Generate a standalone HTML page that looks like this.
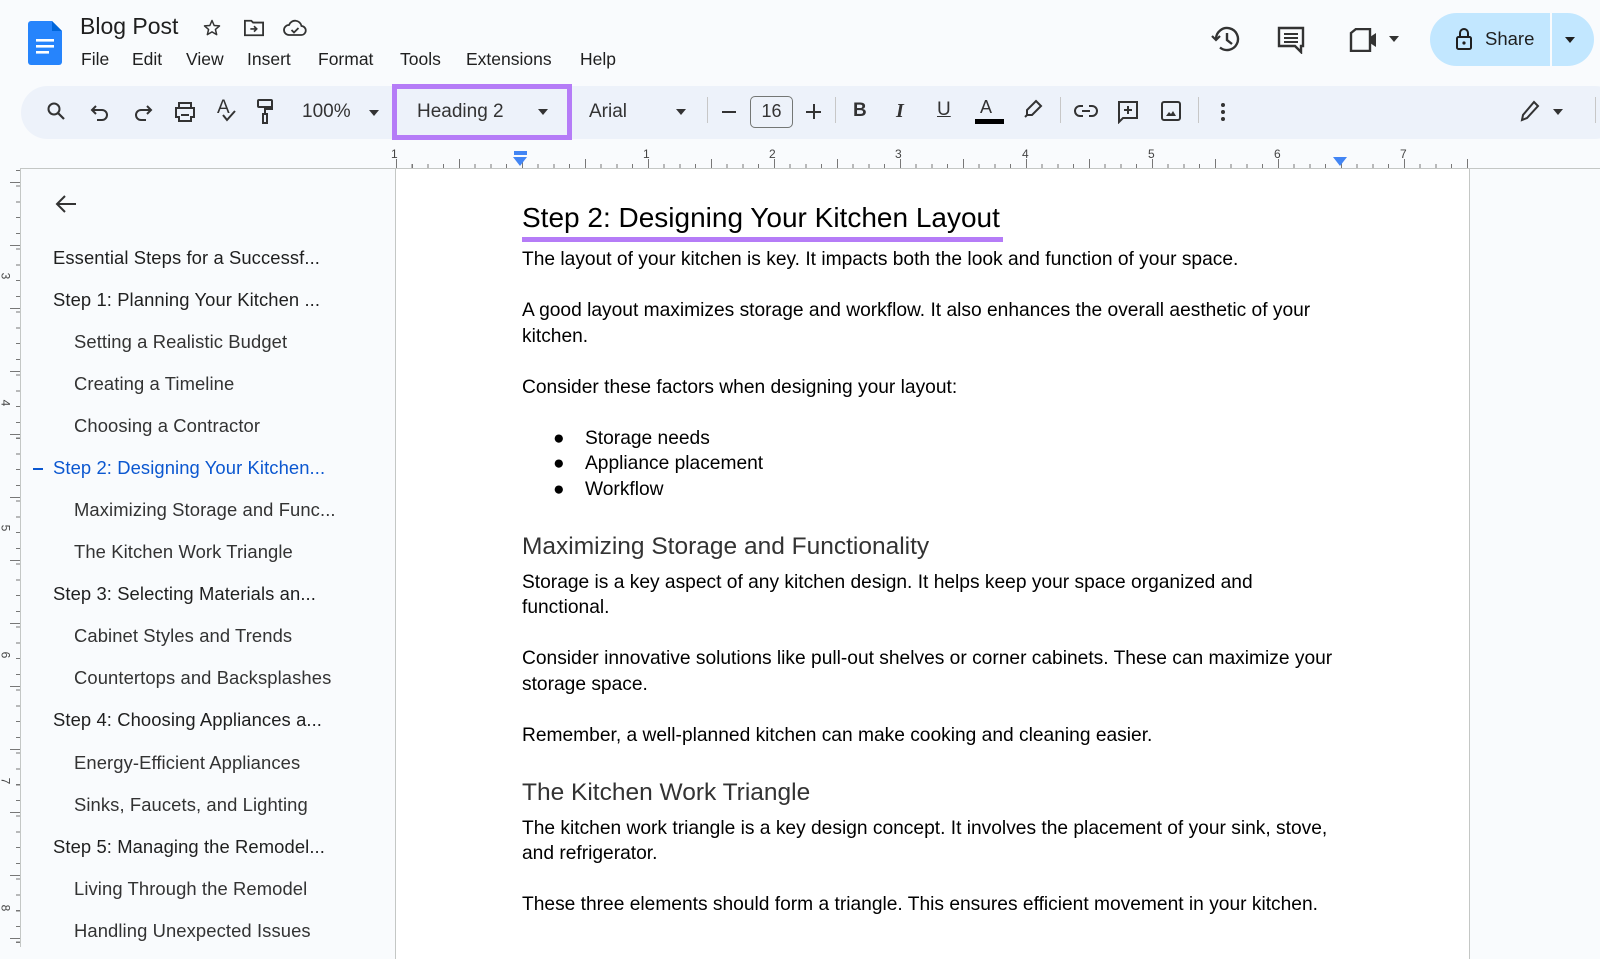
<!DOCTYPE html>
<html><head><meta charset="utf-8"><style>
*{margin:0;padding:0;box-sizing:border-box}
body{width:1600px;height:947px;background:#f9fbfd;font-family:"Liberation Sans",Arial,sans-serif;position:relative;overflow:hidden;color:#1f1f1f}
.a{position:absolute;white-space:nowrap}
.menu{top:49px;font-size:17.5px;color:#1f1f1f}
.tb{position:absolute;left:21px;top:86px;width:1600px;height:53px;background:#edf2fa;border-radius:27px}
.ic{position:absolute;top:98px}
.sep{position:absolute;top:97px;width:1px;height:26px;background:#c7c7c7}
.ol{position:absolute;font-size:18.4px;color:#1f1f1f;white-space:nowrap;letter-spacing:0.1px}
.p{position:absolute;left:522px;font-size:19.2px;color:#000;white-space:nowrap;font-family:"Liberation Sans",Arial,sans-serif}
.h3{position:absolute;left:522px;font-size:24.5px;color:#333;white-space:nowrap}
.rn{position:absolute;top:147px;font-size:12px;color:#444}
.vn{position:absolute;left:2px;font-size:12px;color:#444;transform:rotate(90deg)}
</style></head><body>
<svg class="a" style="left:28px;top:21px" width="34" height="44" viewBox="0 0 34 44"><path d="M3 0h21l10 10v31a3 3 0 0 1-3 3H3a3 3 0 0 1-3-3V3a3 3 0 0 1 3-3z" fill="#2684fc"/><path d="M24 0l10 10H24z" fill="#0066da"/><rect x="8" y="18" width="18" height="2.6" fill="#fff"/><rect x="8" y="24" width="18" height="2.6" fill="#fff"/><rect x="8" y="30" width="13" height="2.6" fill="#fff"/></svg>
<div class="a" style="left:80px;top:13px;font-size:23px;color:#1f1f1f">Blog Post</div>
<svg class="a" style="left:202px;top:18px" width="20" height="20" viewBox="0 0 24 24"><path d="M12 3l2.6 6 6.4.5-4.9 4.2 1.5 6.3L12 16.6 6.4 20l1.5-6.3L3 9.5l6.4-.5z" fill="none" stroke="#333" stroke-width="1.8" stroke-linejoin="round"/></svg>
<svg class="a" style="left:243px;top:18px" width="22" height="20" viewBox="0 0 24 22"><path d="M2 3h7l2 2h11v14H2z" fill="none" stroke="#333" stroke-width="2"/><path d="M8 12h7M12 9l3 3-3 3" fill="none" stroke="#333" stroke-width="1.8"/></svg>
<svg class="a" style="left:283px;top:19px" width="24" height="18" viewBox="0 0 24 18"><path d="M6 16h12a4.5 4.5 0 0 0 .5-9A6.5 6.5 0 0 0 6 6a5 5 0 0 0 0 10z" fill="none" stroke="#333" stroke-width="1.8"/><path d="M8.5 11l2.5 2.5 4.5-4.5" fill="none" stroke="#333" stroke-width="1.8"/></svg>
<div class="a menu" style="left:81px">File</div>
<div class="a menu" style="left:132px">Edit</div>
<div class="a menu" style="left:186px">View</div>
<div class="a menu" style="left:247px">Insert</div>
<div class="a menu" style="left:318px">Format</div>
<div class="a menu" style="left:400px">Tools</div>
<div class="a menu" style="left:466px">Extensions</div>
<div class="a menu" style="left:580px">Help</div>
<svg class="a" style="left:1211px;top:25px" width="30" height="28" viewBox="0 0 30 28"><path d="M5 14A11 11 0 1 1 9 22.5" fill="none" stroke="#333" stroke-width="2.4"/><path d="M1 11l4 4 4-4" fill="none" stroke="#333" stroke-width="2.2"/><path d="M16 8v7l5 4" fill="none" stroke="#333" stroke-width="2.4"/></svg>
<svg class="a" style="left:1277px;top:26px" width="28" height="28" viewBox="0 0 28 28"><path d="M2 2h24v18h-2v6l-6-6H2z" fill="none" stroke="#333" stroke-width="2.4"/><path d="M7 8h14M7 12h14M7 16h14" stroke="#333" stroke-width="2"/></svg>
<svg class="a" style="left:1349px;top:28px" width="30" height="24" viewBox="0 0 30 24"><path d="M2 5l5-4h14v22H2z" fill="none" stroke="#333" stroke-width="2.4"/><path d="M21 9l6-4v14l-6-4z" fill="#333"/></svg>
<svg class="a" style="left:1389px;top:36px" width="10" height="6"><path d="M0 0h10L5 6z" fill="#333"/></svg>
<div class="a" style="left:1430px;top:13px;width:164px;height:53px;background:#c2e7ff;border-radius:27px"></div>
<div class="a" style="left:1550px;top:13px;width:2px;height:53px;background:#f9fbfd"></div>
<svg class="a" style="left:1455px;top:27px" width="18" height="24" viewBox="0 0 18 24"><rect x="2" y="10" width="14" height="12" rx="1.5" fill="none" stroke="#1f1f1f" stroke-width="2"/><path d="M5 10V6a4 4 0 0 1 8 0v4" fill="none" stroke="#1f1f1f" stroke-width="2"/><circle cx="9" cy="16" r="1.6" fill="#1f1f1f"/></svg>
<div class="a" style="left:1485px;top:28px;font-size:18.5px;color:#1f1f1f">Share</div>
<svg class="a" style="left:1565px;top:37px" width="10" height="6"><path d="M0 0h10L5 6z" fill="#1f1f1f"/></svg>
<div class="tb"></div>
<svg class="ic" style="left:46px;top:101px" width="20" height="20" viewBox="0 0 20 20"><circle cx="8" cy="8" r="5.5" fill="none" stroke="#333" stroke-width="2"/><path d="M12 12l6 6" stroke="#333" stroke-width="2.2"/></svg>
<svg class="ic" style="left:90px;top:103px" width="20" height="18" viewBox="0 0 20 18"><path d="M6 3L2 7l4 4" fill="none" stroke="#333" stroke-width="2"/><path d="M2 7h10a5 5 0 0 1 0 10H7" fill="none" stroke="#333" stroke-width="2"/></svg>
<svg class="ic" style="left:133px;top:103px" width="20" height="18" viewBox="0 0 20 18"><path d="M14 3l4 4-4 4" fill="none" stroke="#333" stroke-width="2"/><path d="M18 7H8a5 5 0 0 0 0 10h5" fill="none" stroke="#333" stroke-width="2"/></svg>
<svg class="ic" style="left:174px;top:101px" width="22" height="22" viewBox="0 0 22 22"><path d="M5 2h12v5H5zM2 7h18v9h-3v4H5v-4H2z" fill="none" stroke="#333" stroke-width="2"/><path d="M7 14h8" stroke="#333" stroke-width="2"/></svg>
<div class="a" style="left:217px;top:97px;font-size:19px;color:#333">A</div>
<svg class="a" style="left:222px;top:110px" width="14" height="12"><path d="M1 5l4 5 8-9" fill="none" stroke="#333" stroke-width="2"/></svg>
<svg class="ic" style="left:257px;top:99px" width="16" height="26" viewBox="0 0 16 26"><rect x="1" y="1" width="14" height="7" rx="1" fill="none" stroke="#333" stroke-width="2"/><path d="M15 4v6H8v5" fill="none" stroke="#333" stroke-width="2"/><rect x="6" y="15" width="4" height="9" fill="none" stroke="#333" stroke-width="2"/></svg>
<div class="a" style="left:302px;top:101px;font-size:19px;color:#333">100%</div>
<svg class="a" style="left:369px;top:110px" width="10" height="6"><path d="M0 0h10L5 6z" fill="#333"/></svg>
<div class="a" style="left:392px;top:84px;width:180px;height:56px;border:5px solid #b57cf7;background:#edf2fa"></div>
<div class="a" style="left:417px;top:101px;font-size:19px;color:#333">Heading 2</div>
<svg class="a" style="left:538px;top:109px" width="10" height="6"><path d="M0 0h10L5 6z" fill="#333"/></svg>
<div class="a" style="left:589px;top:101px;font-size:19px;color:#333">Arial</div>
<svg class="a" style="left:676px;top:109px" width="10" height="6"><path d="M0 0h10L5 6z" fill="#333"/></svg>
<div class="sep" style="left:707px"></div>
<div class="a" style="left:722px;top:111px;width:14px;height:2px;background:#333"></div>
<div class="a" style="left:750px;top:96px;width:43px;height:32px;border:1.5px solid #747775;border-radius:5px;text-align:center;font-size:18px;line-height:29px;color:#333">16</div>
<div class="a" style="left:806px;top:111px;width:15px;height:2px;background:#333"></div>
<div class="a" style="left:812.5px;top:104px;width:2px;height:15px;background:#333"></div>
<div class="sep" style="left:835px"></div>
<div class="a" style="left:853px;top:100px;font-size:19px;font-weight:bold;color:#333">B</div>
<div class="a" style="left:896px;top:100px;font-size:20px;font-style:italic;font-family:'Liberation Serif',serif;font-weight:bold;color:#333">I</div>
<div class="a" style="left:937px;top:99px;font-size:19px;color:#333;text-decoration:underline">U</div>
<div class="a" style="left:980px;top:97px;font-size:18px;color:#333">A</div>
<div class="a" style="left:975px;top:119px;width:29px;height:5px;background:#000"></div>
<svg class="ic" style="left:1022px;top:99px" width="22" height="22" viewBox="0 0 22 22"><path d="M14 2l5 5-9 9H5v-5z" fill="none" stroke="#333" stroke-width="2"/><path d="M3 18l2-2h3" fill="none" stroke="#333" stroke-width="2"/></svg>
<div class="sep" style="left:1060px"></div>
<svg class="ic" style="left:1074px;top:104px" width="24" height="14" viewBox="0 0 24 14"><path d="M9 2H6a5 5 0 0 0 0 10h3M15 2h3a5 5 0 0 1 0 10h-3M8 7h8" fill="none" stroke="#333" stroke-width="2"/></svg>
<svg class="ic" style="left:1117px;top:100px" width="22" height="24" viewBox="0 0 22 24"><path d="M2 2h18v16H6l-4 4z" fill="none" stroke="#333" stroke-width="2"/><path d="M11 6v8M7 10h8" stroke="#333" stroke-width="2"/></svg>
<svg class="ic" style="left:1161px;top:101px" width="20" height="20" viewBox="0 0 20 20"><rect x="1" y="1" width="18" height="18" rx="2" fill="none" stroke="#333" stroke-width="2"/><path d="M5 15l3-4 2 2 2-3 3 5z" fill="#333"/></svg>
<div class="sep" style="left:1198px"></div>
<svg class="ic" style="left:1221px;top:103px" width="4" height="18"><circle cx="2" cy="2" r="2" fill="#333"/><circle cx="2" cy="9" r="2" fill="#333"/><circle cx="2" cy="16" r="2" fill="#333"/></svg>
<svg class="ic" style="left:1520px;top:100px" width="20" height="22" viewBox="0 0 20 22"><path d="M14 2l4 4L7 18l-5 2 1-5z" fill="none" stroke="#333" stroke-width="2"/></svg>
<svg class="a" style="left:1553px;top:109px" width="10" height="6"><path d="M0 0h10L5 6z" fill="#333"/></svg>
<div class="sep" style="left:1595px"></div>
<div class="a" style="left:20px;top:168px;width:1580px;height:1px;background:#c4c7c5"></div>
<div class="a" style="left:396px;top:160px;width:1073px;height:8px;background:repeating-linear-gradient(90deg,#777 0 1px,transparent 1px 15.75px);clip-path:inset(4px 0 0 0)"></div>
<div class="a" style="left:396px;top:159px;width:1073px;height:9px;background:repeating-linear-gradient(90deg,#777 0 1px,transparent 1px 63px)"></div>
<div class="rn" style="left:391px">1</div>
<div class="rn" style="left:643px">1</div>
<div class="rn" style="left:769px">2</div>
<div class="rn" style="left:895px">3</div>
<div class="rn" style="left:1022px">4</div>
<div class="rn" style="left:1148px">5</div>
<div class="rn" style="left:1274px">6</div>
<div class="rn" style="left:1400px">7</div>
<div class="a" style="left:514px;top:151px;width:13px;height:4px;background:#4285f4"></div>
<svg class="a" style="left:513px;top:157px" width="14" height="10"><path d="M0 0h14L7 9z" fill="#4285f4"/></svg>
<svg class="a" style="left:1333px;top:157px" width="14" height="10"><path d="M0 0h14L7 9z" fill="#4285f4"/></svg>
<div class="a" style="left:20px;top:168px;width:1px;height:779px;background:#c4c7c5"></div>
<div class="a" style="left:12px;top:170px;width:8px;height:777px;background:repeating-linear-gradient(180deg,#777 0 1px,transparent 1px 15.75px);clip-path:inset(0 0 0 4px)"></div>
<div class="a" style="left:10px;top:182px;width:10px;height:765px;background:repeating-linear-gradient(180deg,#777 0 1px,transparent 1px 63px)"></div>
<div class="vn" style="top:269px">3</div>
<div class="vn" style="top:396px">4</div>
<div class="vn" style="top:521px">5</div>
<div class="vn" style="top:648px">6</div>
<div class="vn" style="top:774px">7</div>
<div class="vn" style="top:901px">8</div>
<div class="a" style="left:395px;top:169px;width:1075px;height:790px;background:#fff;border-left:1.5px solid #c4c7c5;border-right:1.5px solid #c4c7c5"></div>
<svg class="a" style="left:55px;top:195px" width="22" height="18" viewBox="0 0 22 18"><path d="M21 9H3M10 1L2 9l8 8" fill="none" stroke="#333" stroke-width="2"/></svg>
<div class="ol" style="left:53px;top:247px">Essential Steps for a Successf...</div>
<div class="ol" style="left:53px;top:289px">Step 1: Planning Your Kitchen ...</div>
<div class="ol" style="left:74px;top:331px;color:#333">Setting a Realistic Budget</div>
<div class="ol" style="left:74px;top:373px;color:#333">Creating a Timeline</div>
<div class="ol" style="left:74px;top:415px;color:#333">Choosing a Contractor</div>
<div class="a" style="left:33px;top:468px;width:10px;height:2px;background:#0b57d0"></div>
<div class="ol" style="left:53px;top:457px;color:#0b57d0">Step 2: Designing Your Kitchen...</div>
<div class="ol" style="left:74px;top:499px;color:#333">Maximizing Storage and Func...</div>
<div class="ol" style="left:74px;top:541px;color:#333">The Kitchen Work Triangle</div>
<div class="ol" style="left:53px;top:583px">Step 3: Selecting Materials an...</div>
<div class="ol" style="left:74px;top:625px;color:#333">Cabinet Styles and Trends</div>
<div class="ol" style="left:74px;top:667px;color:#333">Countertops and Backsplashes</div>
<div class="ol" style="left:53px;top:709px">Step 4: Choosing Appliances a...</div>
<div class="ol" style="left:74px;top:752px;color:#333">Energy-Efficient Appliances</div>
<div class="ol" style="left:74px;top:794px;color:#333">Sinks, Faucets, and Lighting</div>
<div class="ol" style="left:53px;top:836px">Step 5: Managing the Remodel...</div>
<div class="ol" style="left:74px;top:878px;color:#333">Living Through the Remodel</div>
<div class="ol" style="left:74px;top:920px;color:#333">Handling Unexpected Issues</div>
<div class="a" style="left:522px;top:202px;font-size:28px;color:#000">Step 2: Designing Your Kitchen Layout</div>
<div class="a" style="left:522px;top:237px;width:481px;height:5px;background:#b57cf7"></div>
<div class="p" style="top:249px">The layout of your kitchen is key. It impacts both the look and function of your space.</div>
<div class="p" style="top:300px">A good layout maximizes storage and workflow. It also enhances the overall aesthetic of your</div>
<div class="p" style="top:326px">kitchen.</div>
<div class="p" style="top:377px">Consider these factors when designing your layout:</div>
<div class="p" style="left:553px;top:428px">●</div><div class="p" style="left:585px;top:428px">Storage needs</div>
<div class="p" style="left:553px;top:453px">●</div><div class="p" style="left:585px;top:453px">Appliance placement</div>
<div class="p" style="left:553px;top:479px">●</div><div class="p" style="left:585px;top:479px">Workflow</div>
<div class="h3" style="top:533px">Maximizing Storage and Functionality</div>
<div class="p" style="top:572px">Storage is a key aspect of any kitchen design. It helps keep your space organized and</div>
<div class="p" style="top:597px">functional.</div>
<div class="p" style="top:648px">Consider innovative solutions like pull-out shelves or corner cabinets. These can maximize your</div>
<div class="p" style="top:674px">storage space.</div>
<div class="p" style="top:725px">Remember, a well-planned kitchen can make cooking and cleaning easier.</div>
<div class="h3" style="top:779px">The Kitchen Work Triangle</div>
<div class="p" style="top:818px">The kitchen work triangle is a key design concept. It involves the placement of your sink, stove,</div>
<div class="p" style="top:843px">and refrigerator.</div>
<div class="p" style="top:894px">These three elements should form a triangle. This ensures efficient movement in your kitchen.</div>
</body></html>
